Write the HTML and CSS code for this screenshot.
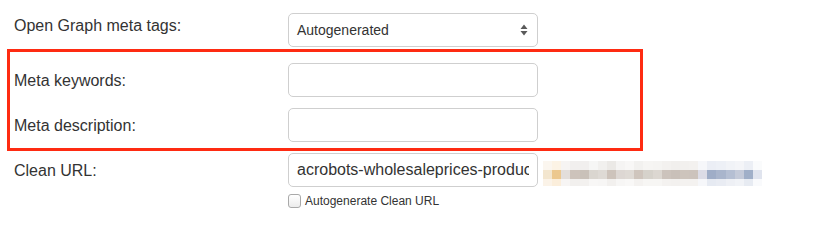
FILE: index.html
```html
<!DOCTYPE html>
<html>
<head>
<meta charset="utf-8">
<link rel="stylesheet" href="styles.css">
</head>
<body>
<form class="form">
  <div class="row">
    <label class="label label-top">Open Graph meta tags:</label>
    <div class="select">
      <span class="select-text">Autogenerated</span>
      <svg class="arrows" width="8" height="12" viewBox="0 0 8 12"><path d="M4 0.5 L7.5 5 L0.5 5 Z M0.5 7 L7.5 7 L4 11.5 Z" fill="#5a5a5a"/></svg>
    </div>
  </div>
  <div class="highlight">
    <div class="row">
      <label class="label">Meta keywords:</label>
      <input class="input" type="text">
    </div>
    <div class="row row-gap">
      <label class="label">Meta description:</label>
      <input class="input" type="text">
    </div>
  </div>
  <div class="row row-url">
    <label class="label">Clean URL:</label>
    <div class="control">
      <input class="input input-url" type="text" value="acrobots-wholesaleprices-product">
      <label class="check"><span class="box"></span>Autogenerate Clean URL</label>
    </div>
    <div class="mosaic">
      <div class="m m1"></div>
      <div class="m m2"></div>
      <div class="m m3"></div>
    </div>
  </div>
</form>
</body>
</html>
```
FILE: styles.css
```css
html, body {
  margin: 0;
  padding: 0;
  background: #fff;
}
body {
  font-family: "Liberation Sans", Arial, Helvetica, sans-serif;
  color: #333;
  width: 818px;
  height: 225px;
  overflow: hidden;
}
.form {
  padding: 13px 0 0 14px;
}
.row {
  display: flex;
  align-items: flex-start;
}
.label {
  width: 274px;
  flex: none;
  font-size: 16px;
  line-height: 20px;
  padding-top: 8px;
  color: #333;
}
.label-top {
  padding-top: 3px;
}
.select {
  box-sizing: border-box;
  width: 250px;
  height: 34px;
  border: 1px solid #cfcfcf;
  border-radius: 5px;
  background: #fff;
  display: flex;
  align-items: center;
  justify-content: space-between;
  padding: 0 9px 0 8px;
  font-size: 14px;
  color: #333;
}
.arrows {
  display: block;
}
.input {
  box-sizing: border-box;
  width: 250px;
  height: 34px;
  border: 1px solid #cfcfcf;
  border-radius: 5px;
  background: #fff;
  padding: 0 8px;
  margin: 0;
  font-family: "Liberation Sans", Arial, Helvetica, sans-serif;
  font-size: 16px;
  color: #333;
  outline: none;
}
.highlight {
  margin: 2px 0 0 -7px;
  width: 636px;
  box-sizing: border-box;
  border: 3px solid #fe2b12;
  padding: 11px 0 6px 4px;
}
.row-gap {
  margin-top: 11px;
}
.row-url {
  margin-top: 2px;
}
.control {
  display: flex;
  flex-direction: column;
  width: 250px;
  flex: none;
}
.check {
  display: flex;
  align-items: center;
  margin-top: 7px;
  font-size: 12px;
  color: #333;
}
.box {
  box-sizing: border-box;
  width: 13px;
  height: 14px;
  border: 1px solid #a9a9a9;
  border-radius: 3px;
  background: linear-gradient(#fff, #ececec);
  margin-right: 4px;
}
.mosaic {
  margin: 8px 0 0 5px;
  width: 219px;
}
.m { height: 9px; }
.m3 { height: 7px; }
.m1 {
  background: linear-gradient(to right,
    #fbf6ef 0 9px, #fcf3e5 9px 18px, #f6f4f3 18px 27px, #f1efee 27px 37px, #f1efee 37px 46px,
    #f6f6f5 46px 55px, #f1f0ee 55px 64px, #ebe9e6 64px 73px, #f5f4f3 73px 82px, #f8f7f6 82px 91px,
    #f2f1ef 91px 100px, #f6f5f3 100px 110px, #f5f4f2 110px 119px, #f3f1ef 119px 128px, #f1efed 128px 137px,
    #f2f0ee 137px 146px, #f3f1ef 146px 155px, #f6f7fa 155px 164px, #ebeef5 164px 173px, #edf0f6 173px 183px,
    #f1f3f7 183px 192px, #f4f5f8 192px 201px, #eceff5 201px 210px, #fafbfc 210px 219px);
}
.m2 {
  background: linear-gradient(to right,
    #f3e6cf 0 9px, #ecc88f 9px 18px, #e3dedb 18px 27px, #cdc3bb 27px 37px, #c9c1b9 37px 46px,
    #dad6d0 46px 55px, #dedad5 55px 64px, #cdc3bb 64px 73px, #ddd7d3 73px 82px, #dfdad5 82px 91px,
    #cfc5bd 91px 100px, #d6d2cb 100px 110px, #dcd7d1 110px 119px, #ccc3bc 119px 128px, #c9c0b9 128px 137px,
    #cdc4bc 137px 146px, #ccc3bc 146px 155px, #dcdce6 155px 164px, #9fadc7 164px 173px, #a9b5cc 173px 183px,
    #b5bfd3 183px 192px, #c4cad9 192px 201px, #a0afc8 201px 210px, #e0e4ee 210px 219px);
}
.m3 {
  background: linear-gradient(to right,
    #fbf3e8 0 9px, #fbeedb 9px 18px, #f7f5f4 18px 27px, #f2f0ee 27px 37px, #f3f1ef 37px 46px,
    #f8f7f6 46px 55px, #f7f6f5 55px 64px, #f2f0ee 64px 73px, #f7f6f5 73px 82px, #f9f8f7 82px 91px,
    #f4f2f0 91px 100px, #f7f6f4 100px 110px, #f7f6f4 110px 119px, #f4f2f0 119px 128px, #f3f1ef 128px 137px,
    #f4f2f0 137px 146px, #f4f2f0 146px 155px, #f6f7fa 155px 164px, #e6eaf2 164px 173px, #e9ecf3 173px 183px,
    #eef0f5 183px 192px, #f1f3f7 192px 201px, #e7ebf2 201px 210px, #f9fafc 210px 219px);
}
```
